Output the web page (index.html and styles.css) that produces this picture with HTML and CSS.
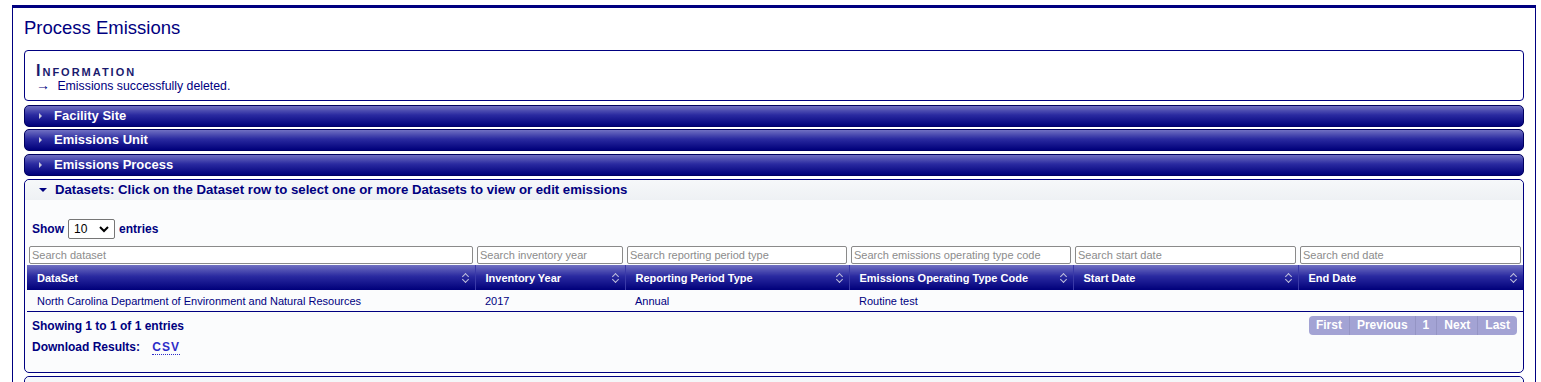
FILE: index.html
```html
<!DOCTYPE html>
<html lang="en">
<head>
    <meta charset="UTF-8">
    <title>Process Emissions</title>
    <link rel="stylesheet" href="styles.css">
</head>
<body>
    <div class="page">
        <h1>Process Emissions</h1>

        <div class="info-box">
            <h2>Information</h2>
            <div class="info-msg"><span class="arrow">&rarr;</span> Emissions successfully deleted.</div>
        </div>

        <div class="acc-header first">
            <span class="tri-right"></span>Facility Site
        </div>
        <div class="acc-header">
            <span class="tri-right"></span>Emissions Unit
        </div>
        <div class="acc-header third">
            <span class="tri-right"></span>Emissions Process
        </div>

        <div class="panel">
            <div class="panel-header">
                <span class="tri-down"></span>Datasets: Click on the Dataset row to select one or more Datasets to view or edit emissions
            </div>
            <div class="panel-body">
                <div class="length">
                    Show
                    <span class="select">10 <svg width="10" height="7" viewBox="0 0 10 7"><path d="M1 1l4 4 4-4" fill="none" stroke="#000" stroke-width="2"/></svg></span>
                    entries
                </div>

                <table class="grid">
                    <colgroup>
                        <col style="width:448px">
                        <col style="width:150px">
                        <col style="width:224px">
                        <col style="width:224px">
                        <col style="width:225px">
                        <col style="width:225px">
                    </colgroup>
                    <tr class="search-row">
                        <td><input type="text" placeholder="Search dataset"></td>
                        <td><input type="text" placeholder="Search inventory year"></td>
                        <td><input type="text" placeholder="Search reporting period type"></td>
                        <td><input type="text" placeholder="Search emissions operating type code"></td>
                        <td><input type="text" placeholder="Search start date"></td>
                        <td><input type="text" placeholder="Search end date"></td>
                    </tr>
                    <tr class="head-row">
                        <th>DataSet<span class="sort"></span></th>
                        <th>Inventory Year<span class="sort"></span></th>
                        <th>Reporting Period Type<span class="sort"></span></th>
                        <th>Emissions Operating Type Code<span class="sort"></span></th>
                        <th>Start Date<span class="sort"></span></th>
                        <th>End Date<span class="sort"></span></th>
                    </tr>
                    <tr class="data-row">
                        <td>North Carolina Department of Environment and Natural Resources</td>
                        <td>2017</td>
                        <td>Annual</td>
                        <td>Routine test</td>
                        <td></td>
                        <td></td>
                    </tr>
                </table>

                <div class="table-footer">
                    <div class="info">Showing 1 to 1 of 1 entries</div>
                    <div class="pager">
                        <span>First</span><span>Previous</span><span>1</span><span>Next</span><span>Last</span>
                    </div>
                </div>
                <div class="download">Download Results: <a href="#">CSV</a></div>
            </div>
        </div>

        <div class="panel">
            <div class="panel-header">
                <span class="tri-right dark"></span>Emissions
            </div>
        </div>
    </div>
</body>
</html>
```

FILE: styles.css
```css
body {
    margin: 0;
    font-family: "Liberation Sans", Arial, sans-serif;
    color: #000080;
    background: #ffffff;
    overflow: hidden;
}

.page {
    margin: 5px 5px 0 12px;
    border-top: 3px solid #000080;
    border-left: 1px solid #000080;
    border-right: 1px solid #000080;
    padding: 0 11px 0 11px;
    height: 400px;
}

h1 {
    font-size: 18.5px;
    font-weight: normal;
    margin: 0;
    padding: 8px 0 0 0;
    line-height: 24px;
    color: #000080;
}

.info-box {
    margin-top: 10px;
    border: 1px solid #000080;
    border-radius: 4px;
    padding: 11px 10px 7px 11px;
    height: 31px;
}

.info-box h2 {
    font-size: 16px;
    font-variant: small-caps;
    letter-spacing: 2px;
    margin: 0;
    line-height: 17px;
    color: #1a1a6e;
}

.info-msg {
    font-size: 12.3px;
    line-height: 14px;
    color: #000080;
}

.arrow {
    display: inline-block;
    width: 18px;
    font-size: 14px;
    line-height: 12px;
}

.acc-header {
    margin-top: 2px;
    height: 20px;
    line-height: 20px;
    border: 1px solid #000060;
    border-radius: 5px;
    background: linear-gradient(#7070c2, #2a2aa0 45%, #00007a);
    color: #ffffff;
    font-size: 13px;
    font-weight: bold;
    padding-left: 14px;
}

.acc-header.first {
    margin-top: 4px;
}

.acc-header.third {
    margin-top: 3px;
}

.tri-right {
    display: inline-block;
    width: 0;
    height: 0;
    border-top: 3px solid transparent;
    border-bottom: 3px solid transparent;
    border-left: 3px solid #c8c8dc;
    margin-right: 12px;
    vertical-align: 1px;
}

.tri-right.dark {
    border-left-color: #000080;
}

.tri-down {
    display: inline-block;
    width: 0;
    height: 0;
    border-left: 4px solid transparent;
    border-right: 4px solid transparent;
    border-top: 4px solid #000080;
    margin-right: 8px;
    vertical-align: 2px;
}

.panel {
    margin-top: 3px;
    border: 1px solid #000080;
    border-radius: 5px;
    background: #fbfcfd;
}

.panel-header {
    height: 20px;
    line-height: 20px;
    font-size: 13.2px;
    font-weight: bold;
    color: #000080;
    padding-left: 14px;
    background: linear-gradient(#f6f8fa, #eef1f4);
    border-radius: 5px 5px 0 0;
}

.panel-body {
    padding: 19px 2px 0 2px;
    height: 153px;
}

.length {
    font-size: 12px;
    font-weight: bold;
    line-height: 20px;
    padding-left: 5px;
    display: flex;
    align-items: center;
    gap: 4px;
}

.select {
    display: inline-flex;
    align-items: center;
    justify-content: space-between;
    width: 35px;
    height: 18px;
    border: 1px solid #767676;
    border-radius: 2px;
    background: #fff;
    color: #000;
    font-weight: normal;
    font-size: 12px;
    padding: 0 5px;
}

.grid {
    margin-top: 7px;
    border-collapse: collapse;
    table-layout: fixed;
    width: 1496px;
    font-size: 11px;
}

.search-row td {
    padding: 0 2px 1px 2px;
}

.search-row input {
    box-sizing: border-box;
    width: 100%;
    height: 18px;
    border: 1px solid #8a8a8a;
    border-radius: 2px;
    font-family: "Liberation Sans", Arial, sans-serif;
    font-size: 11px;
    padding: 0 2px;
    background: #fff;
}

.search-row input::placeholder {
    color: #8c8c8c;
}

.head-row th {
    position: relative;
    height: 25px;
    text-align: left;
    padding: 0 10px;
    background: linear-gradient(#7070c2, #2a2aa0 45%, #00007a);
    color: #ffffff;
    font-size: 11px;
    font-weight: bold;
    border-right: 1px solid #3a3aa8;
}

.head-row th:last-child {
    border-right: none;
}

.sort {
    position: absolute;
    right: 6px;
    top: 8px;
    width: 6px;
    height: 10px;
}

.sort::before,
.sort::after {
    content: "";
    position: absolute;
    left: 0;
    width: 4px;
    height: 4px;
    border-left: 1px solid #c0c0dc;
    border-top: 1px solid #c0c0dc;
    transform: rotate(45deg);
}

.sort::before {
    top: 1px;
}

.sort::after {
    top: 4px;
    transform: rotate(225deg);
}

.data-row td {
    height: 21px;
    padding: 0 10px;
    color: #000080;
    border-bottom: 1px solid #000080;
}

.table-footer {
    display: flex;
    justify-content: space-between;
    align-items: center;
    margin-top: 4px;
    padding: 0 4px 0 5px;
}

.info {
    font-size: 12px;
    font-weight: bold;
}

.pager {
    display: flex;
    background: #a3a3d4;
    border-radius: 4px;
}

.pager span {
    color: #ffffff;
    font-size: 12px;
    font-weight: bold;
    line-height: 19px;
    padding: 0 7px;
    border-left: 1px solid #9494c4;
}

.pager span:first-child {
    border-left: none;
}

.download {
    font-size: 12px;
    font-weight: bold;
    padding-left: 5px;
    margin-top: 5px;
}

.download a {
    color: #2c2cc8;
    text-decoration: none;
    border-bottom: 1px dotted #2c2cc8;
    margin-left: 9px;
    letter-spacing: 1px;
}
```
